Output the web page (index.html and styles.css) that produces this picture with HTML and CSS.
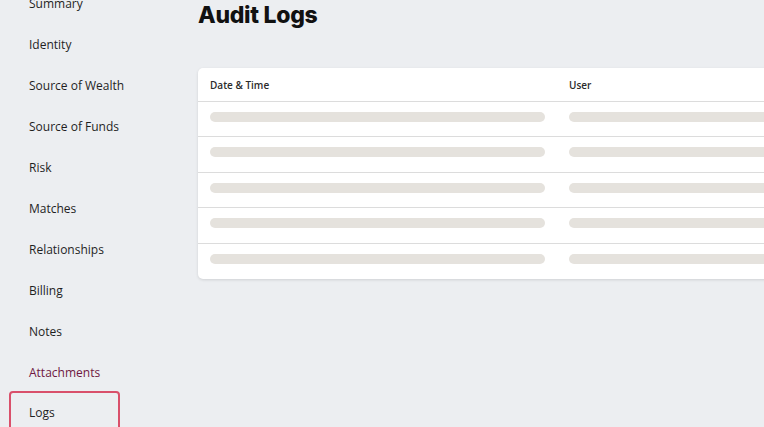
FILE: index.html
```html
<html lang="en">

<head>
    <meta charset="UTF-8">
    <meta name="viewport" content="width=device-width, initial-scale=1.0">
    <title>Audit Logs</title>
    <link rel="stylesheet" href="styles.css">
</head>

<body>
    <div class="layout">
        <!-- Side navigation -->
        <nav class="side-nav">
            <a class="nav-item" href="#">Summary</a>
            <a class="nav-item" href="#">Identity</a>
            <a class="nav-item" href="#">Source of Wealth</a>
            <a class="nav-item" href="#">Source of Funds</a>
            <a class="nav-item" href="#">Risk</a>
            <a class="nav-item" href="#">Matches</a>
            <a class="nav-item" href="#">Relationships</a>
            <a class="nav-item" href="#">Billing</a>
            <a class="nav-item" href="#">Notes</a>
            <a class="nav-item nav-item-active" href="#">Attachments</a>
            <a class="nav-item nav-item-focus" href="#">Logs</a>
        </nav>

        <!-- Main content -->
        <main class="content">
            <h1 class="page-title">Audit Logs</h1>

            <div class="log-card">
                <table class="log-table">
                    <thead>
                        <tr>
                            <th>Date &amp; Time</th>
                            <th>User</th>
                        </tr>
                    </thead>
                    <tbody>
                        <tr><td><div class="skeleton"></div></td><td><div class="skeleton"></div></td></tr>
                        <tr><td><div class="skeleton"></div></td><td><div class="skeleton"></div></td></tr>
                        <tr><td><div class="skeleton"></div></td><td><div class="skeleton"></div></td></tr>
                        <tr><td><div class="skeleton"></div></td><td><div class="skeleton"></div></td></tr>
                        <tr><td><div class="skeleton"></div></td><td><div class="skeleton"></div></td></tr>
                    </tbody>
                </table>
            </div>
        </main>
    </div>
</body>

</html>
```

FILE: styles.css
```css
/* General Styles */
html,
body {
    overflow: hidden;
}

body {
    font-family: 'Open Sans', 'Liberation Sans', sans-serif;
    background-color: #eceef1;
    margin: 0;
    color: #1f1f1f;
}

.layout {
    display: flex;
    height: 427px;
}

/* Side navigation */
.side-nav {
    display: flex;
    flex-direction: column;
    width: 111px;
    margin-left: 9px;
    margin-top: -17px;
    flex-shrink: 0;
}

.nav-item {
    display: flex;
    align-items: center;
    flex-shrink: 0;
    height: 41px;
    padding-left: 20px;
    font-size: 12px;
    white-space: nowrap;
    color: #1f1f1f;
    text-decoration: none;
    box-sizing: border-box;
}

.nav-item-active {
    color: #6f1842;
    font-weight: 500;
}

.nav-item-focus {
    border: 2px solid #d9506b;
    border-radius: 4px;
    padding-left: 18px;
    height: 44px;
    margin-top: -2px;
    padding-bottom: 1px;
}

/* Main content */
.content {
    flex: 1;
    padding-left: 78px;
    min-width: 0;
}

.page-title {
    font-family: 'Inter', sans-serif;
    font-size: 23px;
    font-weight: 800;
    letter-spacing: -0.3px;
    margin: 0;
    line-height: 30px;
    color: #111;
}

.log-card {
    margin-top: 38px;
    width: 620px;
    background-color: #ffffff;
    border-radius: 5px;
    box-shadow: 0 1px 3px rgba(0, 0, 0, 0.12);
    overflow: hidden;
}

.log-table {
    width: 100%;
    border-collapse: collapse;
    table-layout: fixed;
}

.log-table th {
    text-align: left;
    font-size: 10px;
    font-weight: 600;
    color: #2b2b2b;
    height: 33px;
    padding: 1px 12px 0;
    border-bottom: 1px solid #dcdcdc;
}

.log-table th:first-child,
.log-table td:first-child {
    width: 335px;
}

.log-table td {
    height: 35.6px;
    padding: 10px 12px 0;
    vertical-align: top;
    border-bottom: 1px solid #dcdcdc;
    box-sizing: border-box;
}

.log-table tbody tr:last-child td {
    border-bottom: none;
}

.skeleton {
    height: 10px;
    border-radius: 5px;
    background-color: #e5e2dd;
}
```
